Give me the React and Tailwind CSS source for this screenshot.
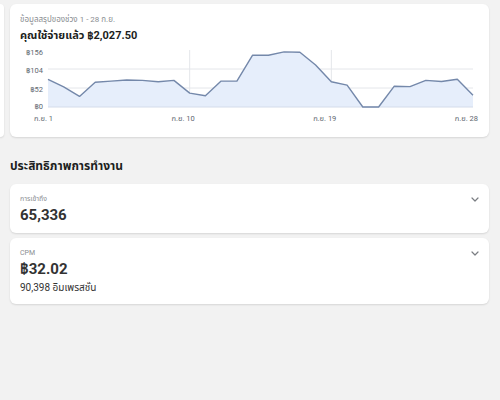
import React from "react";

const data = [76, 55, 29, 68, 71, 74, 73, 69, 73, 38, 31, 71, 71, 142, 142, 151, 150, 115, 69, 60, 0, 0, 57, 56, 73, 70, 76, 32];

function Chevron() {
  return (
    <svg width="8" height="5" viewBox="0 0 8 5" className="mt-[4px]">
      <path d="M1 1 L4 4 L7 1" fill="none" stroke="#7a7d82" strokeWidth="1.2" strokeLinecap="round" strokeLinejoin="round" />
    </svg>
  );
}

function Chart() {
  const x0 = 38;
  const x1 = 463;
  const y0 = 62;
  const k = 0.365;
  const step = (x1 - x0) / (data.length - 1);
  const pts = data.map((v, i) => [x0 + i * step, y0 - v * k]);
  const line = pts.map((p, i) => `${i ? "L" : "M"}${p[0].toFixed(1)} ${p[1].toFixed(1)}`).join(" ");
  const area = `${line} L${x1} ${y0} L${x0} ${y0} Z`;
  const yl = [
    ["฿156", 10],
    ["฿104", 28],
    ["฿52", 47],
    ["฿0", 64],
  ];
  const xl = [
    ["ก.ย. 1", 0],
    ["ก.ย. 10", 9],
    ["ก.ย. 19", 18],
    ["ก.ย. 28", 27],
  ];
  return (
    <svg width="479" height="82" viewBox="0 0 479 82" className="block">
      <line x1={x0} x2={x1} y1={24} y2={24} stroke="#e4e6ea" strokeWidth="1" />
      <line x1={x0} x2={x1} y1={43} y2={43} stroke="#e4e6ea" strokeWidth="1" />
      <line x1={x0 + 9 * step} x2={x0 + 9 * step} y1={5} y2={y0} stroke="#e4e6ea" strokeWidth="1" />
      <line x1={x0 + 18 * step} x2={x0 + 18 * step} y1={5} y2={y0} stroke="#e4e6ea" strokeWidth="1" />
      <path d={area} fill="#e6eefb" />
      <line x1={x0} x2={x1} y1={y0} y2={y0} stroke="#d4dcea" strokeWidth="1" />
      <path d={line} fill="none" stroke="#7488aa" strokeWidth="1.4" strokeLinejoin="round" />
      {yl.map(([t, y]) => (
        <text key={t} x={33} y={y} textAnchor="end" fontSize="7.5" fill="#606770">
          {t}
        </text>
      ))}
      {xl.map(([t, i]) => (
        <text key={t} x={x0 + i * step + 5} y={76} textAnchor="end" fontSize="7.5" fill="#606770">
          {t}
        </text>
      ))}
    </svg>
  );
}

export default function App() {
  return (
    <div
      className="w-[500px] h-[400px] bg-[#f2f2f2] overflow-hidden text-[#1c1e21]"
      style={{ fontFamily: 'Roboto, "Noto Sans", "Noto Sans Thai", "DejaVu Sans", sans-serif' }}
    >
      <div className="flex gap-[6px] pt-1 h-[137px]">
        <div className="w-1 shrink-0 bg-white rounded-r-[6px] shadow-[0_1px_2px_rgba(0,0,0,0.12)]" />
        <div className="w-[479px] shrink-0 bg-white rounded-[6px] shadow-[0_1px_2px_rgba(0,0,0,0.12)] flex flex-col">
          <div className="pt-[10px] px-[10px]">
            <div className="text-[8px] leading-3 text-[#8a8d91]">ข้อมูลสรุปของช่วง 1 - 28 ก.ย.</div>
            <div className="mt-[2px] text-[11px] leading-4 font-bold">คุณใช้จ่ายแล้ว ฿2,027.50</div>
          </div>
          <div className="mt-[1px]">
            <Chart />
          </div>
        </div>
      </div>

      <div className="px-[10px]">
        <div className="mt-[22px] text-[12px] leading-[14px] font-bold">ประสิทธิภาพการทำงาน</div>

        <div className="mt-[11px] w-[479px] h-[49px] bg-white rounded-[6px] shadow-[0_1px_2px_rgba(0,0,0,0.12)] pl-[10px] pr-[10px] pt-[9px] flex justify-between">
          <div>
            <div className="text-[7px] leading-[12px] text-[#8a8d91]">การเข้าถึง</div>
            <div className="text-[15px] leading-[20px] font-bold text-[#333]">65,336</div>
          </div>
          <Chevron />
        </div>

        <div className="mt-[5px] w-[479px] h-[66px] bg-white rounded-[6px] shadow-[0_1px_2px_rgba(0,0,0,0.12)] pl-[10px] pr-[10px] pt-[9px] flex justify-between">
          <div>
            <div className="text-[7px] leading-[12px] text-[#8a8d91]">CPM</div>
            <div className="text-[15px] leading-[20px] font-bold text-[#333]">฿32.02</div>
            <div className="text-[10px] leading-[18px] text-[#333]">90,398 อิมเพรสชั่น</div>
          </div>
          <Chevron />
        </div>
      </div>
    </div>
  );
}
